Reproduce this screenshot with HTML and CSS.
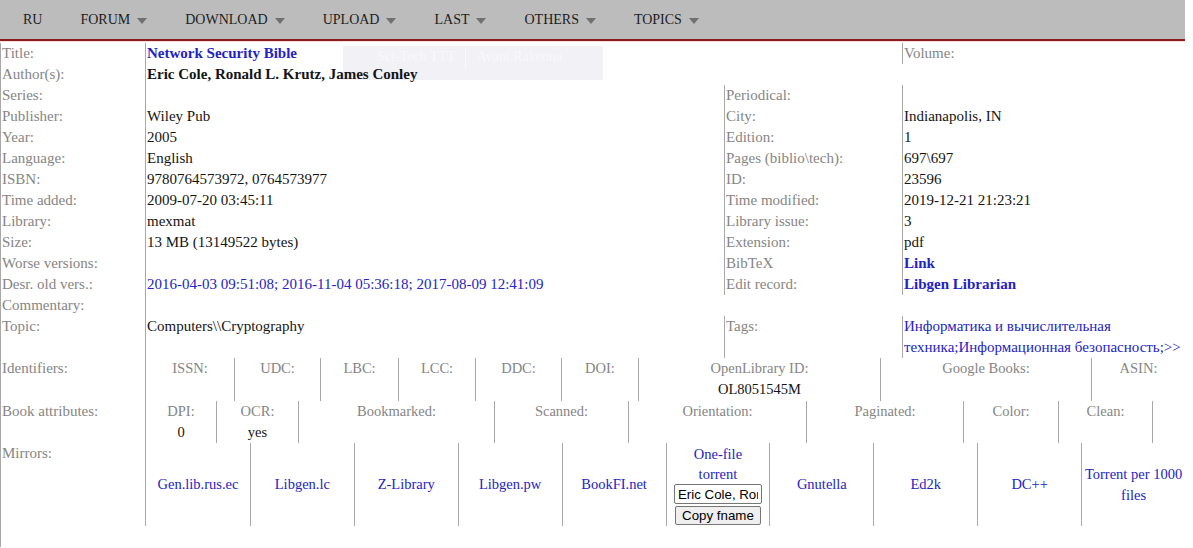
FILE: index.html
```html
<!DOCTYPE html>
<html lang="en">
<head>
    <meta charset="UTF-8">
    <title>Library Genesis: Network Security Bible</title>
    <link rel="stylesheet" href="styles.css">
</head>
<body>
<div class="page">
    <header class="nav">
        <ul class="menu">
            <li>RU</li>
            <li class="has-sub">FORUM</li>
            <li class="has-sub">DOWNLOAD</li>
            <li class="has-sub">UPLOAD</li>
            <li class="has-sub">LAST</li>
            <li class="has-sub">OTHERS</li>
            <li class="has-sub">TOPICS</li>
        </ul>
    </header>

    <!-- faded dropdown left over from the menu -->
    <div class="ghost-menu">
        <span>Sci-Tech TTT</span>
        <span class="ghost-sep"></span>
        <span>Avant Rakenna</span>
    </div>

    <main class="record">
        <div class="row">
            <div class="cell label">Title:</div>
            <div class="cell span-2"><a class="link strong" href="#">Network Security Bible</a></div>
            <div class="cell label">Volume:</div>
        </div>
        <div class="row">
            <div class="cell label">Author(s):</div>
            <div class="cell span-3"><b>Eric Cole, Ronald L. Krutz, James Conley</b></div>
        </div>
        <div class="row">
            <div class="cell label">Series:</div>
            <div class="cell"></div>
            <div class="cell label">Periodical:</div>
            <div class="cell"></div>
        </div>
        <div class="row">
            <div class="cell label">Publisher:</div>
            <div class="cell">Wiley Pub</div>
            <div class="cell label">City:</div>
            <div class="cell">Indianapolis, IN</div>
        </div>
        <div class="row">
            <div class="cell label">Year:</div>
            <div class="cell">2005</div>
            <div class="cell label">Edition:</div>
            <div class="cell">1</div>
        </div>
        <div class="row">
            <div class="cell label">Language:</div>
            <div class="cell">English</div>
            <div class="cell label">Pages (biblio\tech):</div>
            <div class="cell">697\697</div>
        </div>
        <div class="row">
            <div class="cell label">ISBN:</div>
            <div class="cell">9780764573972, 0764573977</div>
            <div class="cell label">ID:</div>
            <div class="cell">23596</div>
        </div>
        <div class="row">
            <div class="cell label">Time added:</div>
            <div class="cell">2009-07-20 03:45:11</div>
            <div class="cell label">Time modified:</div>
            <div class="cell">2019-12-21 21:23:21</div>
        </div>
        <div class="row">
            <div class="cell label">Library:</div>
            <div class="cell">mexmat</div>
            <div class="cell label">Library issue:</div>
            <div class="cell">3</div>
        </div>
        <div class="row">
            <div class="cell label">Size:</div>
            <div class="cell">13 MB (13149522 bytes)</div>
            <div class="cell label">Extension:</div>
            <div class="cell">pdf</div>
        </div>
        <div class="row">
            <div class="cell label">Worse versions:</div>
            <div class="cell"></div>
            <div class="cell label">BibTeX</div>
            <div class="cell"><a class="link strong" href="#">Link</a></div>
        </div>
        <div class="row">
            <div class="cell label">Desr. old vers.:</div>
            <div class="cell"><a class="link" href="#">2016-04-03 09:51:08; 2016-11-04 05:36:18; 2017-08-09 12:41:09</a></div>
            <div class="cell label">Edit record:</div>
            <div class="cell"><a class="link strong" href="#">Libgen Librarian</a></div>
        </div>
        <div class="row">
            <div class="cell label">Commentary:</div>
            <div class="cell span-3"></div>
        </div>
        <div class="row">
            <div class="cell label">Topic:</div>
            <div class="cell">Computers\\Cryptography</div>
            <div class="cell label">Tags:</div>
            <div class="cell tags">
                <a class="link" href="#">Информатика и вычислительная<br>техника;Информационная безопасность;&gt;&gt;</a>
            </div>
        </div>

        <div class="row">
            <div class="cell label">Identifiers:</div>
            <div class="cell span-3 flush">
                <div class="sub ids">
                    <div><span class="label">ISSN:</span></div>
                    <div><span class="label">UDC:</span></div>
                    <div><span class="label">LBC:</span></div>
                    <div><span class="label">LCC:</span></div>
                    <div><span class="label">DDC:</span></div>
                    <div><span class="label">DOI:</span></div>
                    <div><span class="label">OpenLibrary ID:</span><br>OL8051545M</div>
                    <div><span class="label">Google Books:</span></div>
                    <div><span class="label">ASIN:</span></div>
                </div>
            </div>
        </div>

        <div class="row">
            <div class="cell label">Book attributes:</div>
            <div class="cell span-3 flush">
                <div class="sub attrs">
                    <div><span class="label">DPI:</span><br>0</div>
                    <div><span class="label">OCR:</span><br>yes</div>
                    <div><span class="label">Bookmarked:</span></div>
                    <div><span class="label">Scanned:</span></div>
                    <div><span class="label">Orientation:</span></div>
                    <div><span class="label">Paginated:</span></div>
                    <div><span class="label">Color:</span></div>
                    <div><span class="label">Clean:</span></div>
                    <div></div>
                </div>
            </div>
        </div>

        <div class="row">
            <div class="cell label">Mirrors:</div>
            <div class="cell span-3 flush">
                <div class="sub mirrors">
                    <div><a class="link" href="#">Gen.lib.rus.ec</a></div>
                    <div><a class="link" href="#">Libgen.lc</a></div>
                    <div><a class="link" href="#">Z-Library</a></div>
                    <div><a class="link" href="#">Libgen.pw</a></div>
                    <div><a class="link" href="#">BookFI.net</a></div>
                    <div class="torrent">
                        <a class="link torrent-link" href="#">One-file torrent</a>
                        <input class="fname" type="text" value="Eric Cole, Ronald L. Krutz, James Conley - Network Security Bible">
                        <button class="copy">Copy fname</button>
                    </div>
                    <div><a class="link" href="#">Gnutella</a></div>
                    <div><a class="link" href="#">Ed2k</a></div>
                    <div><a class="link" href="#">DC++</a></div>
                    <div><a class="link" href="#">Torrent per 1000 files</a></div>
                </div>
            </div>
        </div>
    </main>
</div>
</body>
</html>
```

FILE: styles.css
```css
:root {
    --nav-bg: #bcbcbc;
    --nav-line: #8a1c1c;
    --rule: #a8a8a8;
    --label: #858585;
    --text: #141414;
    --link: #2323c6;
}

* {
    margin: 0;
    padding: 0;
    box-sizing: border-box;
}

body {
    font-family: "Liberation Serif", "Times New Roman", serif;
    font-size: 15px;
    color: var(--text);
    background: #fff;
}

.page {
    width: 1185px;
    position: relative;
}

/* top menu */
.nav {
    height: 41px;
    background: var(--nav-bg);
    border-bottom: 2px solid var(--nav-line);
    box-shadow: 0 1px 0 #f2dcdc;
}

.menu {
    display: flex;
    list-style: none;
    padding-left: 23px;
    gap: 38px;
}

.menu li {
    display: flex;
    align-items: center;
    font-size: 14px;
    line-height: 39px;
    color: #1c1c1c;
}

.menu .has-sub::after {
    content: "";
    margin-left: 7px;
    margin-top: 2px;
    border-left: 5px solid transparent;
    border-right: 5px solid transparent;
    border-top: 6px solid #707070;
}

.ghost-menu {
    position: absolute;
    left: 343px;
    top: 46px;
    width: 260px;
    height: 34px;
    display: flex;
    align-items: flex-start;
    gap: 10px;
    padding: 3px 0 0 34px;
    background: rgba(232, 232, 240, 0.6);
    color: #f8f8fb;
    font-size: 14px;
    line-height: 16px;
}

.ghost-sep {
    width: 1px;
    height: 20px;
    background: #fafafc;
}

/* record table */
.record {
    position: relative;
    margin-top: 2px;
    border-left: 1px solid var(--rule);
    padding-bottom: 21px;
}

.row {
    display: grid;
    grid-template-columns: 144px 579px 178px 283px;
    line-height: 21px;
}

.cell {
    min-height: 21px;
    padding-left: 1px;
    border-left: 1px solid var(--rule);
}

.row > .cell:first-child {
    border-left: none;
}

.span-2 {
    grid-column: span 2;
}

.span-3 {
    grid-column: span 3;
}

.flush {
    padding-left: 0;
}

.label {
    color: var(--label);
}

.link {
    color: var(--link);
    text-decoration: none;
}

.strong {
    font-weight: bold;
}

.tags .link {
    white-space: nowrap;
}

/* nested cells for identifiers, attributes, mirrors */
.sub {
    display: grid;
    text-align: center;
    font-size: 14.5px;
    line-height: 21px;
}

.sub > div + div {
    border-left: 1px solid var(--rule);
}

.ids {
    grid-template-columns: 88px 86px 78px 77px 86px 77px 242px 211px 1fr;
}

.ids > div {
    min-height: 43px;
}

.attrs {
    grid-template-columns: 70px 82px 196px 134px 178px 157px 95px 94px 1fr;
}

.attrs > div {
    min-height: 42px;
}

.mirrors {
    grid-template-columns: repeat(10, 1fr);
}

.mirrors > div {
    min-height: 83px;
    display: flex;
    align-items: center;
    justify-content: center;
    padding: 0 2px;
}

.mirrors > .torrent {
    flex-direction: column;
    justify-content: flex-start;
    padding-top: 1px;
    line-height: 20px;
}

.torrent-link {
    display: block;
    width: 70px;
}

.fname {
    width: 88px;
    height: 20px;
    padding: 1px 3px;
    font-family: "Liberation Sans", Arial, sans-serif;
    font-size: 13.3px;
    color: #000;
    border: 1px solid #767676;
    border-radius: 2px;
}

.copy {
    margin-top: 2px;
    height: 19px;
    padding: 0 6px;
    font-family: "Liberation Sans", Arial, sans-serif;
    font-size: 13.3px;
    color: #000;
    background: #efefef;
    border: 1px solid #767676;
    border-radius: 2px;
}
```
